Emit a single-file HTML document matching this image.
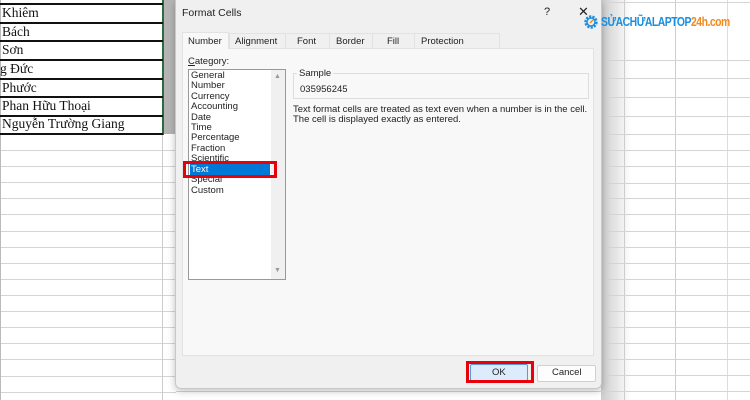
<!DOCTYPE html>
<html><head><meta charset="utf-8"><style>
*{margin:0;padding:0;box-sizing:border-box}
body{width:750px;height:400px;overflow:hidden;background:#fff;position:relative;font-family:"Liberation Sans",sans-serif}
.a{position:absolute}
.hl{position:absolute;height:1px;background:#d4d4d4}
.bl{position:absolute;left:0;width:163px;height:2px;background:#111}
.cell{position:absolute;left:2px;font-family:"Liberation Serif",serif;font-size:13.5px;color:#111}
.t{position:absolute;font-size:9.5px;color:#222}
.li{position:absolute;left:191px;font-size:9.5px;color:#222}
</style></head><body>
<div class="hl" style="left:0;top:150px;width:176px"></div><div class="hl" style="left:0;top:166px;width:176px"></div><div class="hl" style="left:0;top:182px;width:176px"></div><div class="hl" style="left:0;top:198px;width:176px"></div><div class="hl" style="left:0;top:214px;width:176px"></div><div class="hl" style="left:0;top:231px;width:176px"></div><div class="hl" style="left:0;top:247px;width:176px"></div><div class="hl" style="left:0;top:263px;width:176px"></div><div class="hl" style="left:0;top:279px;width:176px"></div><div class="hl" style="left:0;top:295px;width:176px"></div><div class="hl" style="left:0;top:311px;width:176px"></div><div class="hl" style="left:0;top:327px;width:176px"></div><div class="hl" style="left:0;top:343px;width:176px"></div><div class="hl" style="left:0;top:359px;width:176px"></div><div class="hl" style="left:0;top:376px;width:176px"></div><div class="hl" style="left:0;top:392px;width:176px"></div>
<div class="a" style="left:0;top:0;width:1px;height:400px;background:#bbb"></div>
<div class="a" style="left:162px;top:134px;width:1px;height:266px;background:#ccc"></div>
<div class="a" style="left:163px;top:0;width:12px;height:134px;background:#b5b5b5"></div>
<div class="a" style="left:162px;top:0;width:2px;height:135px;background:#2e6b40"></div>
<div class="bl" style="top:3px"></div><div class="bl" style="top:22px"></div><div class="bl" style="top:40px"></div><div class="bl" style="top:59px"></div><div class="bl" style="top:78px"></div><div class="bl" style="top:96px"></div><div class="bl" style="top:115px"></div><div class="bl" style="top:133px"></div>
<div class="cell" style="top:5px">Khiêm</div>
<div class="cell" style="top:24px">Bách</div>
<div class="cell" style="top:42px">Sơn</div>
<div class="cell" style="top:61px;left:0">g Đức</div>
<div class="cell" style="top:80px">Phước</div>
<div class="cell" style="top:98px">Phan Hữu Thoại</div>
<div class="cell" style="top:116px">Nguyễn Trường Giang</div>
<div class="a" style="left:601px;top:0;width:30px;height:400px;background:linear-gradient(90deg,#ccc,#fff)"></div>
<div class="a" style="left:624px;top:0;width:1px;height:400px;background:#ccc"></div>
<div class="a" style="left:675px;top:0;width:1px;height:400px;background:#ccc"></div>
<div class="a" style="left:727px;top:0;width:1px;height:400px;background:#ddd"></div>
<div class="hl" style="left:601px;top:2px;width:149px"></div><div class="hl" style="left:601px;top:60px;width:149px"></div><div class="hl" style="left:601px;top:78px;width:149px"></div><div class="hl" style="left:601px;top:97px;width:149px"></div><div class="hl" style="left:601px;top:116px;width:149px"></div><div class="hl" style="left:601px;top:134px;width:149px"></div><div class="hl" style="left:601px;top:150px;width:149px"></div><div class="hl" style="left:601px;top:166px;width:149px"></div><div class="hl" style="left:601px;top:183px;width:149px"></div><div class="hl" style="left:601px;top:198px;width:149px"></div><div class="hl" style="left:601px;top:214px;width:149px"></div><div class="hl" style="left:601px;top:231px;width:149px"></div><div class="hl" style="left:601px;top:247px;width:149px"></div><div class="hl" style="left:601px;top:263px;width:149px"></div><div class="hl" style="left:601px;top:279px;width:149px"></div><div class="hl" style="left:601px;top:295px;width:149px"></div><div class="hl" style="left:601px;top:311px;width:149px"></div><div class="hl" style="left:601px;top:327px;width:149px"></div><div class="hl" style="left:601px;top:343px;width:149px"></div><div class="hl" style="left:601px;top:359px;width:149px"></div><div class="hl" style="left:601px;top:375px;width:149px"></div><div class="hl" style="left:601px;top:391px;width:149px"></div>
<div class="hl" style="left:176px;top:391px;width:425px"></div>
<div class="a" style="left:175px;top:0;width:427px;height:389px;background:#f0f0f0;border:1px solid #c8c8c8;border-top:none;border-radius:0 0 6px 6px;box-shadow:0 2px 8px rgba(0,0,0,.25)"></div>
<div class="t" style="left:182px;top:7px;font-size:10.5px">Format Cells</div>
<div class="t" style="left:544px;top:6px;font-size:11px">?</div>
<div class="t" style="left:578px;top:4px;font-size:13px">✕</div>
<div class="a" style="left:182px;top:48px;width:412px;height:308px;background:#f8f8f8;border:1px solid #e2e2e2"></div>
<div class="a" style="left:182px;top:32px;width:47px;height:17px;background:#f8f8f8;border:1px solid #e2e2e2;border-bottom:none"></div>
<div class="a" style="left:229px;top:33px;width:271px;height:15px;border:1px solid #e2e2e2;border-bottom:none"></div>
<div class="a" style="left:285px;top:33px;width:1px;height:15px;background:#e2e2e2"></div>
<div class="a" style="left:329px;top:33px;width:1px;height:15px;background:#e2e2e2"></div>
<div class="a" style="left:372px;top:33px;width:1px;height:15px;background:#e2e2e2"></div>
<div class="a" style="left:414px;top:33px;width:1px;height:15px;background:#e2e2e2"></div>
<div class="t" style="left:188px;top:36px">Number</div>
<div class="t" style="left:235px;top:36px">Alignment</div>
<div class="t" style="left:297px;top:36px">Font</div>
<div class="t" style="left:336px;top:36px">Border</div>
<div class="t" style="left:387px;top:36px">Fill</div>
<div class="t" style="left:421px;top:36px">Protection</div>
<div class="t" style="left:188px;top:56px"><u>C</u>ategory:</div>
<div class="a" style="left:188px;top:69px;width:98px;height:211px;background:#fff;border:1px solid #999"></div>
<div class="a" style="left:271px;top:70px;width:14px;height:209px;background:#f0f0f0"></div>
<div class="t" style="left:274px;top:73px;font-size:7px;color:#999">▲</div>
<div class="t" style="left:274px;top:267px;font-size:7px;color:#999">▼</div>
<div class="li" style="top:70px">General</div>
<div class="li" style="top:80px">Number</div>
<div class="li" style="top:91px">Currency</div>
<div class="li" style="top:101px">Accounting</div>
<div class="li" style="top:112px">Date</div>
<div class="li" style="top:122px">Time</div>
<div class="li" style="top:132px">Percentage</div>
<div class="li" style="top:143px">Fraction</div>
<div class="li" style="top:153px">Scientific</div>
<div class="a" style="left:190px;top:164px;width:80px;height:11px;background:#0078d7"></div>
<div class="li" style="top:164px;color:#fff">Text</div>
<div class="li" style="top:174px">Special</div>
<div class="li" style="top:185px">Custom</div>
<div class="a" style="left:183px;top:161px;width:94px;height:17px;border:3px solid #e8000b"></div>
<div class="a" style="left:293px;top:73px;width:296px;height:26px;border:1px solid #ddd"></div>
<div class="a" style="left:297px;top:68px;background:#f8f8f8;padding:0 2px;font-size:9.5px;color:#222">Sample</div>
<div class="t" style="left:300px;top:84px">035956245</div>
<div class="t" style="left:293px;top:104px">Text format cells are treated as text even when a number is in the cell.</div>
<div class="t" style="left:293px;top:114px">The cell is displayed exactly as entered.</div>
<div class="a" style="left:470px;top:364px;width:58px;height:17px;background:#dcecfc;border:1px solid #5a9ad8;border-radius:2px"></div>
<div class="t" style="left:492px;top:367px">OK</div>
<div class="a" style="left:466px;top:361px;width:68px;height:22px;border:3px solid #e8000b"></div>
<div class="a" style="left:537px;top:365px;width:59px;height:17px;background:#fdfdfd;border:1px solid #d0d0d0;border-radius:2px"></div>
<div class="t" style="left:552px;top:367px">Cancel</div>
<svg class="a" style="left:583px;top:14px" width="16" height="16" viewBox="0 0 16 16"><circle cx="8" cy="8" r="5.5" fill="none" stroke="#1a8fe0" stroke-width="2.4" stroke-dasharray="2.2 1.2"/><circle cx="8" cy="8" r="4" fill="none" stroke="#1a8fe0" stroke-width="1.5"/><path d="M10 6 L7 9" stroke="#f08a1c" stroke-width="1.5"/></svg>
<div class="a" style="left:601px;top:14px;font-size:13px;font-weight:bold;letter-spacing:-0.6px;color:#1a8fe0;transform:scaleX(.8);transform-origin:left;white-space:nowrap">SỬACHỮALAPTOP<span style="color:#f08a1c">24h.com</span></div>
</body></html>
